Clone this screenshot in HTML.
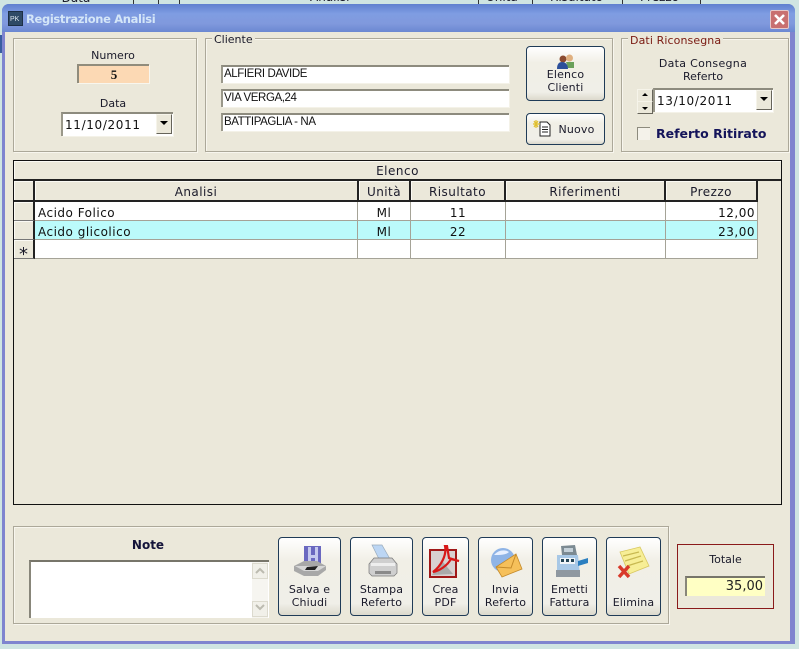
<!DOCTYPE html>
<html><head><meta charset="utf-8"><style>
*{box-sizing:border-box;margin:0;padding:0}
html,body{width:799px;height:649px;overflow:hidden;background:#cfe4e2;font-family:"DejaVu Sans","Liberation Sans",sans-serif;font-size:11px;color:#1a1a2a}
.a{position:absolute}
.t{position:absolute;white-space:nowrap;text-align:center;line-height:13px}
.panel{position:absolute;border:1px solid #aca899;box-shadow:inset 1px 1px 0 #f8f6ee,1px 1px 0 #f8f6ee}
.leg{position:absolute;background:#ebe8da;padding:0 2px;line-height:13px;white-space:nowrap}
.inp{position:absolute;background:#fff;border-top:2px solid #8d8b7e;border-left:2px solid #9a988a;font-family:"Liberation Sans",sans-serif;font-size:11.5px;letter-spacing:-.4px;line-height:15px;padding-left:1px;color:#111;white-space:nowrap;box-shadow:1px 1px 0 #f4f2e8}
.btn{position:absolute;border:1px solid #1f3b57;border-radius:4px;background:linear-gradient(#fff,#f1efe6 30%,#f0efe8 85%,#dcd9cc);text-align:center;line-height:13px}
.btn span{position:absolute;left:0;right:0;text-align:center;white-space:nowrap;letter-spacing:.15px}
.btn svg{position:absolute}
.h{position:absolute;background:#ebe8da;border-right:2px solid #222;border-bottom:2px solid #222;text-align:center;font-size:12px;letter-spacing:.45px;line-height:22px;height:21px;box-shadow:inset 1px 1px 0 #fbfaf4}
.rh{position:absolute;left:14px;width:21px;height:19px;background:#ebe8da;border-right:2px solid #222;border-bottom:1px solid #777;box-shadow:inset 1px 1px 0 #fbfaf4;text-align:center;line-height:19px}
.c{position:absolute;height:19px;border-right:1px solid #a5a397;border-bottom:1px solid #a5a397;line-height:22px;white-space:nowrap;font-size:12px;letter-spacing:.5px;color:#111}
.dd{position:absolute;background:#ebe8da;width:16px;border:1px solid;border-color:#f6f4ea #66645a #66645a #f6f4ea}
.dd:after{content:"";position:absolute;left:3px;top:6px;border:4px solid transparent;border-top:4px solid #000;border-bottom:0}
.date{font:12px/22px 'DejaVu Sans',sans-serif!important;letter-spacing:.65px;padding-left:2px}
</style></head><body>
<div class="t" style="left:46px;top:-8px;font-size:12px;width:60px">Data</div>
<div class="t" style="left:310px;top:-9px;font-size:12px">Analisi</div>
<div class="t" style="left:486px;top:-9px;font-size:12px">Unità</div>
<div class="t" style="left:550px;top:-9px;font-size:12px">Risultato</div>
<div class="t" style="left:640px;top:-9px;font-size:12px">Prezzo</div>
<div class="a" style="left:133px;top:0;width:1px;height:4px;background:#333"></div>
<div class="a" style="left:158px;top:0;width:1px;height:4px;background:#333"></div>
<div class="a" style="left:179px;top:0;width:1px;height:4px;background:#333"></div>
<div class="a" style="left:478px;top:0;width:1px;height:4px;background:#333"></div>
<div class="a" style="left:532px;top:0;width:1px;height:4px;background:#333"></div>
<div class="a" style="left:622px;top:0;width:1px;height:4px;background:#333"></div>
<div class="a" style="left:700px;top:0;width:1px;height:4px;background:#333"></div>
<div class="a" style="left:0;top:35px;width:2px;height:18px;background:#3a5ea0"></div>

<!-- window -->
<div class="a" style="left:2px;top:4px;width:793px;height:640px;background:#7f84cf;border-radius:7px 7px 0 0"></div>
<div class="a" style="left:2px;top:4px;width:793px;height:28px;border-radius:7px 7px 0 0;background:linear-gradient(#5f80cf,#7f9de2 35%,#8099dd 70%,#6b88d2)"></div>
<div class="a" style="left:5px;top:32px;width:785px;height:609px;background:#ebe8da"></div>
<div class="a" style="left:8px;top:11px;width:15px;height:15px;background:#2f4a66;border:1px solid #1d2f45"></div>
<div class="t" style="left:10px;top:16px;font-size:7px;line-height:8px;color:#dfe8f0;font-family:'Liberation Sans',sans-serif">PK</div>
<div class="t" style="left:26px;top:12px;font-weight:bold;font-size:11.500px;color:#d4e6f8;line-height:15px;font-family:'DejaVu Sans',sans-serif;letter-spacing:-.35px">Registrazione Analisi</div>
<div class="a" style="left:770px;top:10px;width:19px;height:19px;background:#c87070;border:1px solid #e6c8c8;border-radius:2px"></div>
<svg class="a" style="left:770px;top:10px" width="19" height="19"><path d="M5 5L14 14M14 5L5 14" stroke="#fff" stroke-width="2.600"/></svg>

<!-- Panel numero -->
<div class="panel" style="left:13px;top:38px;width:184px;height:114px"></div>
<div class="t" style="left:13px;width:200px;top:49px">Numero</div>
<div class="a" style="left:77px;top:64px;width:72px;height:19px;background:#fcd9b4;border-top:2px solid #908c7c;border-left:2px solid #908c7c;box-shadow:1px 1px 0 #f8f6ee;text-align:center;font:bold 13px/17px 'Liberation Serif',serif;color:#111">5</div>
<div class="t" style="left:13px;width:200px;top:97px">Data</div>
<div class="inp date" style="left:61px;top:112px;width:112px;height:24px">11/10/2011</div>
<div class="dd" style="left:156px;top:114px;height:20px"></div>

<!-- Cliente -->
<div class="panel" style="left:205px;top:38px;width:408px;height:114px"></div>
<div class="leg" style="left:212px;top:33px">Cliente</div>
<div class="inp" style="left:221px;top:65px;width:288px;height:18px">ALFIERI DAVIDE</div>
<div class="inp" style="left:221px;top:89px;width:288px;height:18px">VIA VERGA,24</div>
<div class="inp" style="left:221px;top:113px;width:288px;height:18px">BATTIPAGLIA - NA</div>
<div class="btn" style="left:526px;top:46px;width:79px;height:55px">
<svg style="left:30px;top:7px" width="18" height="15" viewBox="0 0 18 15"><circle cx="6" cy="5" r="3.500" fill="#8a4a30"/><circle cx="12.500" cy="4" r="3.500" fill="#e0b080"/><path d="M9 8h8v6h-6z" fill="#6aa05a"/><path d="M0 15c0-5 2-7 5-7s6 2 6 7z" fill="#2c4f9a"/></svg>
<span style="top:21px">Elenco</span><span style="top:34px">Clienti</span></div>
<div class="btn" style="left:526px;top:113px;width:79px;height:32px">
<svg style="left:6px;top:5px" width="20" height="19" viewBox="0 0 20 19"><path d="M7 3h7l3 3v11H7z" fill="#fff" stroke="#222"/><path d="M9 8h6M9 10.500h6M9 13h6" stroke="#222"/><path d="M3 1v8M0 5h7M1 2l4 6M5 2L1 8" stroke="#e0c030" stroke-width="1.200"/></svg>
<span style="top:9px;left:22px">Nuovo</span></div>

<!-- Dati -->
<div class="panel" style="left:621px;top:38px;width:168px;height:114px"></div>
<div class="leg" style="left:628px;top:34px;color:#7a1a12;letter-spacing:.1px">Dati Riconsegna</div>
<div class="t" style="left:621px;width:164px;top:57px;letter-spacing:.3px">Data Consegna</div>
<div class="t" style="left:621px;width:164px;top:70px">Referto</div>
<div class="a" style="left:637px;top:89px;width:16px;height:13px;background:#ebe8da;border:1px solid;border-color:#f6f4ea #66645a #66645a #f6f4ea"></div>
<div class="a" style="left:637px;top:101px;width:16px;height:13px;background:#ebe8da;border:1px solid;border-color:#f6f4ea #66645a #66645a #f6f4ea"></div>
<svg class="a" style="left:637px;top:89px" width="16" height="25"><path d="M5 7h6L8 4zM5 18h6L8 21z" fill="#000"/></svg>
<div class="inp date" style="left:653px;top:88px;width:120px;height:24px">13/10/2011</div>
<div class="dd" style="left:756px;top:90px;height:20px"></div>
<div class="a" style="left:637px;top:127px;width:13px;height:13px;background:#f4f2ea;border-top:1px solid #8d8b7e;border-left:1px solid #8d8b7e"></div>
<div class="t" style="left:656px;top:126px;font-weight:bold;font-size:12.500px;line-height:15px;color:#14145a">Referto Ritirato</div>

<!-- Grid -->
<div class="a" style="left:13px;top:160px;width:769px;height:345px;border:1px solid #111;background:#ebe8da"></div>
<div class="a" style="left:14px;top:161px;width:767px;height:20px;border-bottom:2px solid #222;text-align:center;font-size:12px;letter-spacing:.5px;line-height:21px;box-shadow:inset 1px 1px 0 #fbfaf4">Elenco</div>
<div class="h" style="left:14px;top:181px;width:21px"></div>
<div class="h" style="left:35px;top:181px;width:324px">Analisi</div>
<div class="h" style="left:359px;top:181px;width:52px">Unità</div>
<div class="h" style="left:411px;top:181px;width:95px">Risultato</div>
<div class="h" style="left:506px;top:181px;width:160px">Riferimenti</div>
<div class="h" style="left:666px;top:181px;width:92px">Prezzo</div>

<div class="rh" style="top:202px"></div><div class="rh" style="top:221px"></div>
<div class="rh" style="top:240px;font-size:18px;line-height:29px;overflow:hidden">*</div>

<div class="c" style="left:35px;top:202px;width:323px;background:#fff;padding-left:3px">Acido Folico</div>
<div class="c" style="left:358px;top:202px;width:53px;background:#fff;text-align:center">Ml</div>
<div class="c" style="left:411px;top:202px;width:95px;background:#fff;text-align:center">11</div>
<div class="c" style="left:506px;top:202px;width:160px;background:#fff"></div>
<div class="c" style="left:666px;top:202px;width:92px;background:#fff;text-align:right;padding-right:2px">12,00</div>

<div class="c" style="left:35px;top:221px;width:323px;background:#bbfbfb;padding-left:3px">Acido glicolico</div>
<div class="c" style="left:358px;top:221px;width:53px;background:#bbfbfb;text-align:center">Ml</div>
<div class="c" style="left:411px;top:221px;width:95px;background:#bbfbfb;text-align:center">22</div>
<div class="c" style="left:506px;top:221px;width:160px;background:#bbfbfb"></div>
<div class="c" style="left:666px;top:221px;width:92px;background:#bbfbfb;text-align:right;padding-right:2px">23,00</div>

<div class="c" style="left:35px;top:240px;width:323px;background:#fff"></div>
<div class="c" style="left:358px;top:240px;width:53px;background:#fff"></div>
<div class="c" style="left:411px;top:240px;width:95px;background:#fff"></div>
<div class="c" style="left:506px;top:240px;width:160px;background:#fff"></div>
<div class="c" style="left:666px;top:240px;width:92px;background:#fff"></div>

<!-- Bottom -->
<div class="panel" style="left:13px;top:526px;width:656px;height:98px"></div>
<div class="t" style="left:28px;width:240px;top:539px;font-weight:bold;font-size:12px;color:#14143a">Note</div>
<div class="a" style="left:29px;top:560px;width:240px;height:58px;background:#fff;border-top:2px solid #77756a;border-left:2px solid #88867a"></div>
<div class="a" style="left:252px;top:562px;width:16px;height:56px;background:#f6f5f0"></div>
<div class="a" style="left:252px;top:563px;width:16px;height:16px;background:#f1f0e9;border:1px solid #dcdace"></div>
<div class="a" style="left:252px;top:601px;width:16px;height:16px;background:#f1f0e9;border:1px solid #dcdace"></div>
<svg class="a" style="left:252px;top:563px" width="16" height="54"><path d="M4 10l4-4 4 4M4 42l4 4 4-4" fill="none" stroke="#bcbbb0" stroke-width="2"/></svg>

<div class="btn" style="left:278px;top:537px;width:63px;height:79px">
<svg style="left:14px;top:8px" width="34" height="32" viewBox="0 0 34 32"><path d="M11 0h17v20H11z" fill="#6a68c0"/><path d="M15 1h3v8h4V1h3v19h-3v-8h-4v8h-3z" fill="#c5c9ee"/><path d="M1 20l10-5h13l9 5v4l-8 6H11L1 25z" fill="#a8a8a8"/><path d="M2 20l9 5h14l8-5" fill="#d6d6d6"/><path d="M14 21l11-1-3 4H12z" fill="#222"/></svg>
<span style="top:45px">Salva e</span><span style="top:58px">Chiudi</span></div>

<div class="btn" style="left:350px;top:537px;width:63px;height:79px">
<svg style="left:15px;top:6px" width="34" height="34" viewBox="0 0 34 34"><path d="M6 1h10l8 14H13z" fill="#bcd6f4" stroke="#9ab" stroke-width=".7"/><path d="M8 14h18l5 6v9l-3 3H6l-3-3v-9z" fill="#cfcfcf" stroke="#777" stroke-width=".7"/><path d="M5 19h24v3H5z" fill="#eee"/><path d="M9 27h16v3H9z" fill="#8a8a8a"/></svg>
<span style="top:45px">Stampa</span><span style="top:58px">Referto</span></div>

<div class="btn" style="left:422px;top:537px;width:47px;height:79px">
<svg style="left:6px;top:7px" width="34" height="33" viewBox="0 0 34 33"><path d="M1 5h26v27H1z" fill="#d8d0d0" stroke="#a01818" stroke-width="2"/><path d="M3 30L14 17l10 12z" fill="#aaa"/><path d="M16 1c2 9-4 20-12 26 6-1 14-6 18-13l8 2-10-3-2-12z" fill="none" stroke="#d81818" stroke-width="2.200"/></svg>
<span style="top:45px">Crea</span><span style="top:58px">PDF</span></div>

<div class="btn" style="left:478px;top:537px;width:55px;height:79px">
<svg style="left:10px;top:9px" width="34" height="32" viewBox="0 0 34 32"><circle cx="14" cy="13" r="12" fill="#8fb4e6"/><path d="M5 8c4-5 11-6 15-3-3 3-9 3-15 3z" fill="#e8f0ff"/><path d="M7 20L27 7l6 15-20 8z" fill="#f6c05a" stroke="#c48a2a" stroke-width=".8"/><path d="M7 20l15 1 5-14" fill="none" stroke="#c48a2a"/></svg>
<span style="top:45px">Invia</span><span style="top:58px">Referto</span></div>

<div class="btn" style="left:542px;top:537px;width:55px;height:79px">
<svg style="left:11px;top:7px" width="36" height="33" viewBox="0 0 36 33"><path d="M7 1l14-1 2 10H8z" fill="#7c8a92"/><path d="M10 3h9v4h-9z" fill="#c4d0d8"/><path d="M3 10h21l2 20H3z" fill="#a8c8e6"/><path d="M6 13h15v6H6z" fill="#f0f4f8"/><path d="M7 14h3v3H7zM12 14h3v3h-3zM17 14h3v3h-3z" fill="#245"/><path d="M2 25h24v7H2z" fill="#8f98a0"/><path d="M24 16l10-3v5l-10 3z" fill="#2b7fc0"/></svg>
<span style="top:45px">Emetti</span><span style="top:58px">Fattura</span></div>

<div class="btn" style="left:606px;top:537px;width:55px;height:79px">
<svg style="left:10px;top:8px" width="34" height="34" viewBox="0 0 34 34"><path d="M3 6l20-5 9 19-20 8z" fill="#f7ee96" stroke="#d8c860" stroke-width=".8"/><path d="M6 10l16-4M8 15l16-5M10 20l16-5" stroke="#c8b850" stroke-width="1.200"/><path d="M2 20l10 11M12 20L2 31" stroke="#d83a2a" stroke-width="3.500"/></svg>
<span style="top:58px">Elimina</span></div>

<!-- Totale -->
<div class="a" style="left:677px;top:544px;width:97px;height:65px;border:1px solid #8a1a1a"></div>
<div class="t" style="left:677px;width:97px;top:553px">Totale</div>
<div class="a" style="left:685px;top:576px;width:80px;height:20px;background:#ffffc4;border-top:2px solid #77756a;border-left:2px solid #88867a;text-align:right;padding-right:2px;font-size:13px;line-height:17px;color:#222">35,00</div>
</body></html>
